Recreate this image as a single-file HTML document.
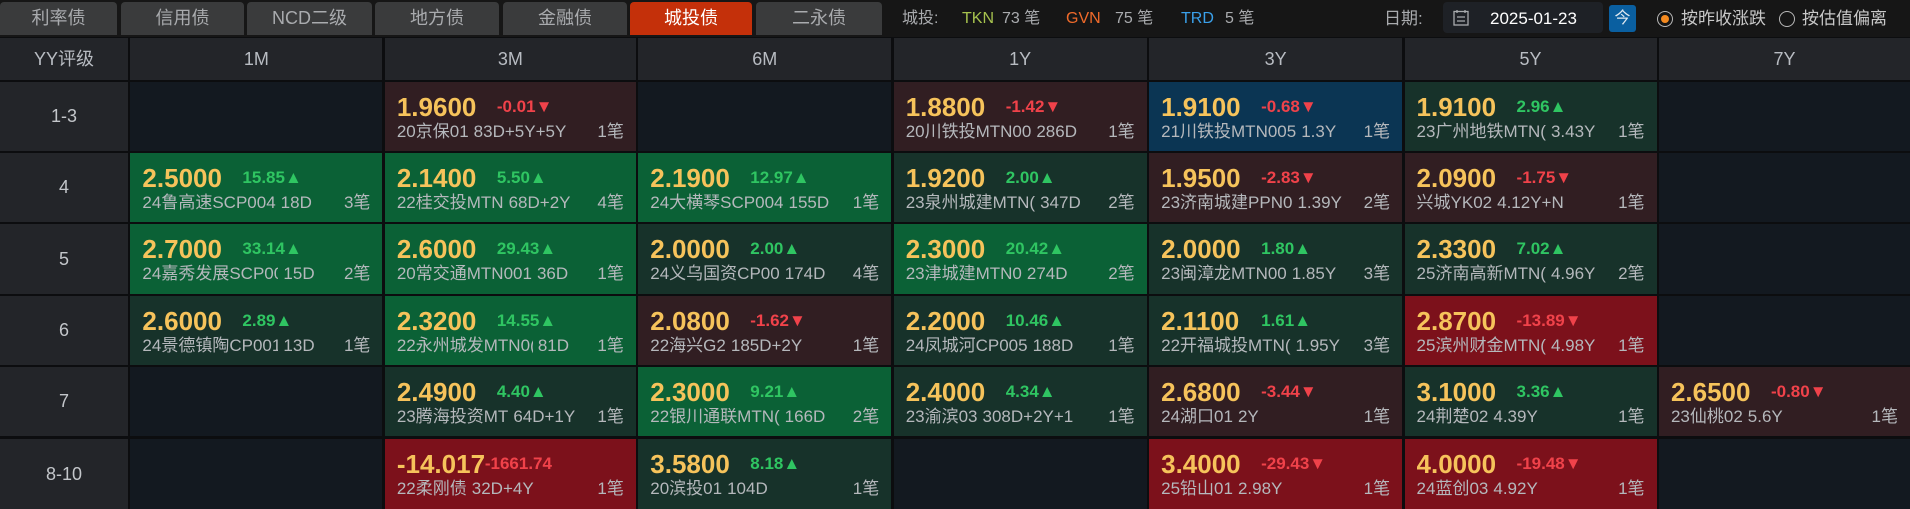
<!DOCTYPE html>
<html><head><meta charset="utf-8">
<style>
*{margin:0;padding:0;box-sizing:border-box}
body{width:1910px;height:503px;background:#0c0d0f;overflow:hidden;position:relative;font-family:"Liberation Sans","Noto Sans CJK SC",sans-serif;color:#b8bcc2}
.top{position:absolute;left:0;top:0;width:1910px;height:37px;background:#161616}
.tab{position:absolute;top:2px;height:33px;background:#3a3b3c;border-radius:4px 4px 0 0;color:#a9abae;font-size:18px;text-align:center;line-height:33px}
.tab.on{background:#c4300a;color:#fff}
.t{position:absolute;top:9px;font-size:16px;white-space:nowrap;line-height:20px}
.grid{position:absolute;left:0;top:38px;width:1910px;display:grid;grid-template-columns:128px 252px 251px 253px 253px 253px 252px 251px;column-gap:2.43px}
.h{background:#232529;height:42px;line-height:42px;text-align:center;font-size:18px;color:#b8bcc2}
.row{position:absolute;left:0;width:1910px;display:grid;grid-template-columns:128px 252px 251px 253px 253px 253px 252px 251px;column-gap:2.43px}
.y{background:#232529;text-align:center;font-size:18px;color:#c3c6ca;display:flex;align-items:center;justify-content:center}
.c{position:relative;overflow:hidden;background:#131920}
.G{background:#0b6136}.g{background:#17322a}.r{background:#311e22}.R{background:#7c111b}.B{background:#0b3553}
.p{position:absolute;left:12px;top:10px;width:98px;overflow:hidden;white-space:nowrap;font-weight:bold;font-size:26px;color:#f6c35b;line-height:30px}
.d{position:absolute;left:112px;top:15px;font-weight:bold;font-size:17px;line-height:20px;white-space:nowrap}
.up{color:#2fc562}.dn{color:#f0424a}
.n{position:absolute;left:12px;top:40px;font-size:17px;line-height:20px;white-space:nowrap;color:#b5b8bc}
.n i{font-style:normal;display:inline-block;max-width:136px;overflow:hidden;vertical-align:top;margin-right:5px}
.k{position:absolute;right:12px;top:40px;font-size:17px;line-height:20px;color:#b5b8bc}
</style></head><body>
<div class="top"></div>
<div class="tab" style="left:0;width:117px">利率债</div>
<div class="tab" style="left:121px;width:123px">信用债</div>
<div class="tab" style="left:247px;width:125px">NCD二级</div>
<div class="tab" style="left:375px;width:124px">地方债</div>
<div class="tab" style="left:503px;width:124px">金融债</div>
<div class="tab on" style="left:630px;width:122px">城投债</div>
<div class="tab" style="left:756px;width:126px">二永债</div>
<div class="t" style="left:902px;color:#a9abae">城投:</div>
<div class="t" style="left:962px;color:#a6c24e">TKN</div>
<div class="t" style="left:1002px;color:#a9abae">73 笔</div>
<div class="t" style="left:1066px;color:#ef6a2a">GVN</div>
<div class="t" style="left:1115px;color:#a9abae">75 笔</div>
<div class="t" style="left:1181px;color:#3aa0ea">TRD</div>
<div class="t" style="left:1225px;color:#a9abae">5 笔</div>
<div class="t" style="left:1384px;color:#a9abae;font-size:17px">日期:</div>
<div style="position:absolute;left:1443px;top:2px;width:160px;height:31px;background:#1e2126;border-radius:4px"></div>
<svg style="position:absolute;left:1453px;top:9px" width="16" height="17" viewBox="0 0 16 17"><rect x="1" y="2.5" width="14" height="13.5" fill="none" stroke="#a9abae" stroke-width="1.3"/><path d="M4 1v3M12 1v3M4 8h8M4 12h8" stroke="#a9abae" stroke-width="1.3"/></svg>
<div class="t" style="left:1490px;color:#fff;font-size:17px">2025-01-23</div>
<div style="position:absolute;left:1609px;top:5px;width:27px;height:27px;background:#0a5fa0;border-radius:3px;color:#dfe8f0;font-size:16px;text-align:center;line-height:27px">今</div>
<div style="position:absolute;left:1657px;top:11px;width:16px;height:16px;border:1.5px solid #b8b8b8;border-radius:50%;background:#161616"><div style="margin:2.5px;width:8px;height:8px;border-radius:50%;background:#f58a1f"></div></div>
<div class="t" style="left:1681px;color:#c8c8c8;font-size:17px">按昨收涨跌</div>
<div style="position:absolute;left:1779px;top:11px;width:16px;height:16px;border:1.5px solid #b8b8b8;border-radius:50%"></div>
<div class="t" style="left:1802px;color:#c8c8c8;font-size:17px">按估值偏离</div>

<div class="grid">
<div class="h">YY评级</div><div class="h">1M</div><div class="h">3M</div><div class="h">6M</div><div class="h">1Y</div><div class="h">3Y</div><div class="h">5Y</div><div class="h">7Y</div>
</div>

<div class="row" style="top:82px;height:69px">
<div class="y">1-3</div>
<div class="c"></div>
<div class="c r"><div class="p">1.9600</div><div class="d dn">-0.01▼</div><div class="n"><i>20京保01</i>83D+5Y+5Y</div><div class="k">1笔</div></div>
<div class="c"></div>
<div class="c r"><div class="p">1.8800</div><div class="d dn">-1.42▼</div><div class="n"><i>20川铁投MTN00</i>286D</div><div class="k">1笔</div></div>
<div class="c B"><div class="p">1.9100</div><div class="d dn">-0.68▼</div><div class="n"><i>21川铁投MTN005</i>1.3Y</div><div class="k">1笔</div></div>
<div class="c g"><div class="p">1.9100</div><div class="d up">2.96▲</div><div class="n"><i>23广州地铁MTN(</i>3.43Y</div><div class="k">1笔</div></div>
<div class="c"></div>
</div>

<div class="row" style="top:153px;height:69px">
<div class="y">4</div>
<div class="c G"><div class="p">2.5000</div><div class="d up">15.85▲</div><div class="n"><i>24鲁高速SCP004</i>18D</div><div class="k">3笔</div></div>
<div class="c G"><div class="p">2.1400</div><div class="d up">5.50▲</div><div class="n"><i>22桂交投MTN</i>68D+2Y</div><div class="k">4笔</div></div>
<div class="c G"><div class="p">2.1900</div><div class="d up">12.97▲</div><div class="n"><i>24大横琴SCP004</i>155D</div><div class="k">1笔</div></div>
<div class="c g"><div class="p">1.9200</div><div class="d up">2.00▲</div><div class="n"><i>23泉州城建MTN(</i>347D</div><div class="k">2笔</div></div>
<div class="c r"><div class="p">1.9500</div><div class="d dn">-2.83▼</div><div class="n"><i>23济南城建PPN0</i>1.39Y</div><div class="k">2笔</div></div>
<div class="c r"><div class="p">2.0900</div><div class="d dn">-1.75▼</div><div class="n"><i>兴城YK02</i>4.12Y+N</div><div class="k">1笔</div></div>
<div class="c"></div>
</div>

<div class="row" style="top:224px;height:70px">
<div class="y">5</div>
<div class="c G"><div class="p">2.7000</div><div class="d up">33.14▲</div><div class="n"><i>24嘉秀发展SCP00</i>15D</div><div class="k">2笔</div></div>
<div class="c G"><div class="p">2.6000</div><div class="d up">29.43▲</div><div class="n"><i>20常交通MTN001</i>36D</div><div class="k">1笔</div></div>
<div class="c g"><div class="p">2.0000</div><div class="d up">2.00▲</div><div class="n"><i>24义乌国资CP00</i>174D</div><div class="k">4笔</div></div>
<div class="c G"><div class="p">2.3000</div><div class="d up">20.42▲</div><div class="n"><i>23津城建MTN0</i>274D</div><div class="k">2笔</div></div>
<div class="c g"><div class="p">2.0000</div><div class="d up">1.80▲</div><div class="n"><i>23闽漳龙MTN00</i>1.85Y</div><div class="k">3笔</div></div>
<div class="c g"><div class="p">2.3300</div><div class="d up">7.02▲</div><div class="n"><i>25济南高新MTN(</i>4.96Y</div><div class="k">2笔</div></div>
<div class="c"></div>
</div>

<div class="row" style="top:296px;height:69px">
<div class="y">6</div>
<div class="c g"><div class="p">2.6000</div><div class="d up">2.89▲</div><div class="n"><i>24景德镇陶CP001</i>13D</div><div class="k">1笔</div></div>
<div class="c G"><div class="p">2.3200</div><div class="d up">14.55▲</div><div class="n"><i>22永州城发MTN0(</i>81D</div><div class="k">1笔</div></div>
<div class="c r"><div class="p">2.0800</div><div class="d dn">-1.62▼</div><div class="n"><i>22海兴G2</i>185D+2Y</div><div class="k">1笔</div></div>
<div class="c g"><div class="p">2.2000</div><div class="d up">10.46▲</div><div class="n"><i>24凤城河CP005</i>188D</div><div class="k">1笔</div></div>
<div class="c g"><div class="p">2.1100</div><div class="d up">1.61▲</div><div class="n"><i>22开福城投MTN(</i>1.95Y</div><div class="k">3笔</div></div>
<div class="c R"><div class="p">2.8700</div><div class="d dn">-13.89▼</div><div class="n"><i>25滨州财金MTN(</i>4.98Y</div><div class="k">1笔</div></div>
<div class="c"></div>
</div>

<div class="row" style="top:367px;height:69px">
<div class="y">7</div>
<div class="c"></div>
<div class="c g"><div class="p">2.4900</div><div class="d up">4.40▲</div><div class="n"><i>23腾海投资MT</i>64D+1Y</div><div class="k">1笔</div></div>
<div class="c G"><div class="p">2.3000</div><div class="d up">9.21▲</div><div class="n"><i>22银川通联MTN(</i>166D</div><div class="k">2笔</div></div>
<div class="c g"><div class="p">2.4000</div><div class="d up">4.34▲</div><div class="n"><i>23渝滨03</i>308D+2Y+1</div><div class="k">1笔</div></div>
<div class="c r"><div class="p">2.6800</div><div class="d dn">-3.44▼</div><div class="n"><i>24湖口01</i>2Y</div><div class="k">1笔</div></div>
<div class="c g"><div class="p">3.1000</div><div class="d up">3.36▲</div><div class="n"><i>24荆楚02</i>4.39Y</div><div class="k">1笔</div></div>
<div class="c r"><div class="p">2.6500</div><div class="d dn">-0.80▼</div><div class="n"><i>23仙桃02</i>5.6Y</div><div class="k">1笔</div></div>
</div>

<div class="row" style="top:439px;height:70px">
<div class="y">8-10</div>
<div class="c"></div>
<div class="c R"><div class="p" style="width:88px">-14.0172</div><div class="d dn" style="left:100px">-1661.74</div><div class="n"><i>22柔刚债</i>32D+4Y</div><div class="k">1笔</div></div>
<div class="c g"><div class="p">3.5800</div><div class="d up">8.18▲</div><div class="n"><i>20滨投01</i>104D</div><div class="k">1笔</div></div>
<div class="c"></div>
<div class="c R"><div class="p">3.4000</div><div class="d dn">-29.43▼</div><div class="n"><i>25铅山01</i>2.98Y</div><div class="k">1笔</div></div>
<div class="c R"><div class="p">4.0000</div><div class="d dn">-19.48▼</div><div class="n"><i>24蓝创03</i>4.92Y</div><div class="k">1笔</div></div>
<div class="c"></div>
</div>
</body></html>
